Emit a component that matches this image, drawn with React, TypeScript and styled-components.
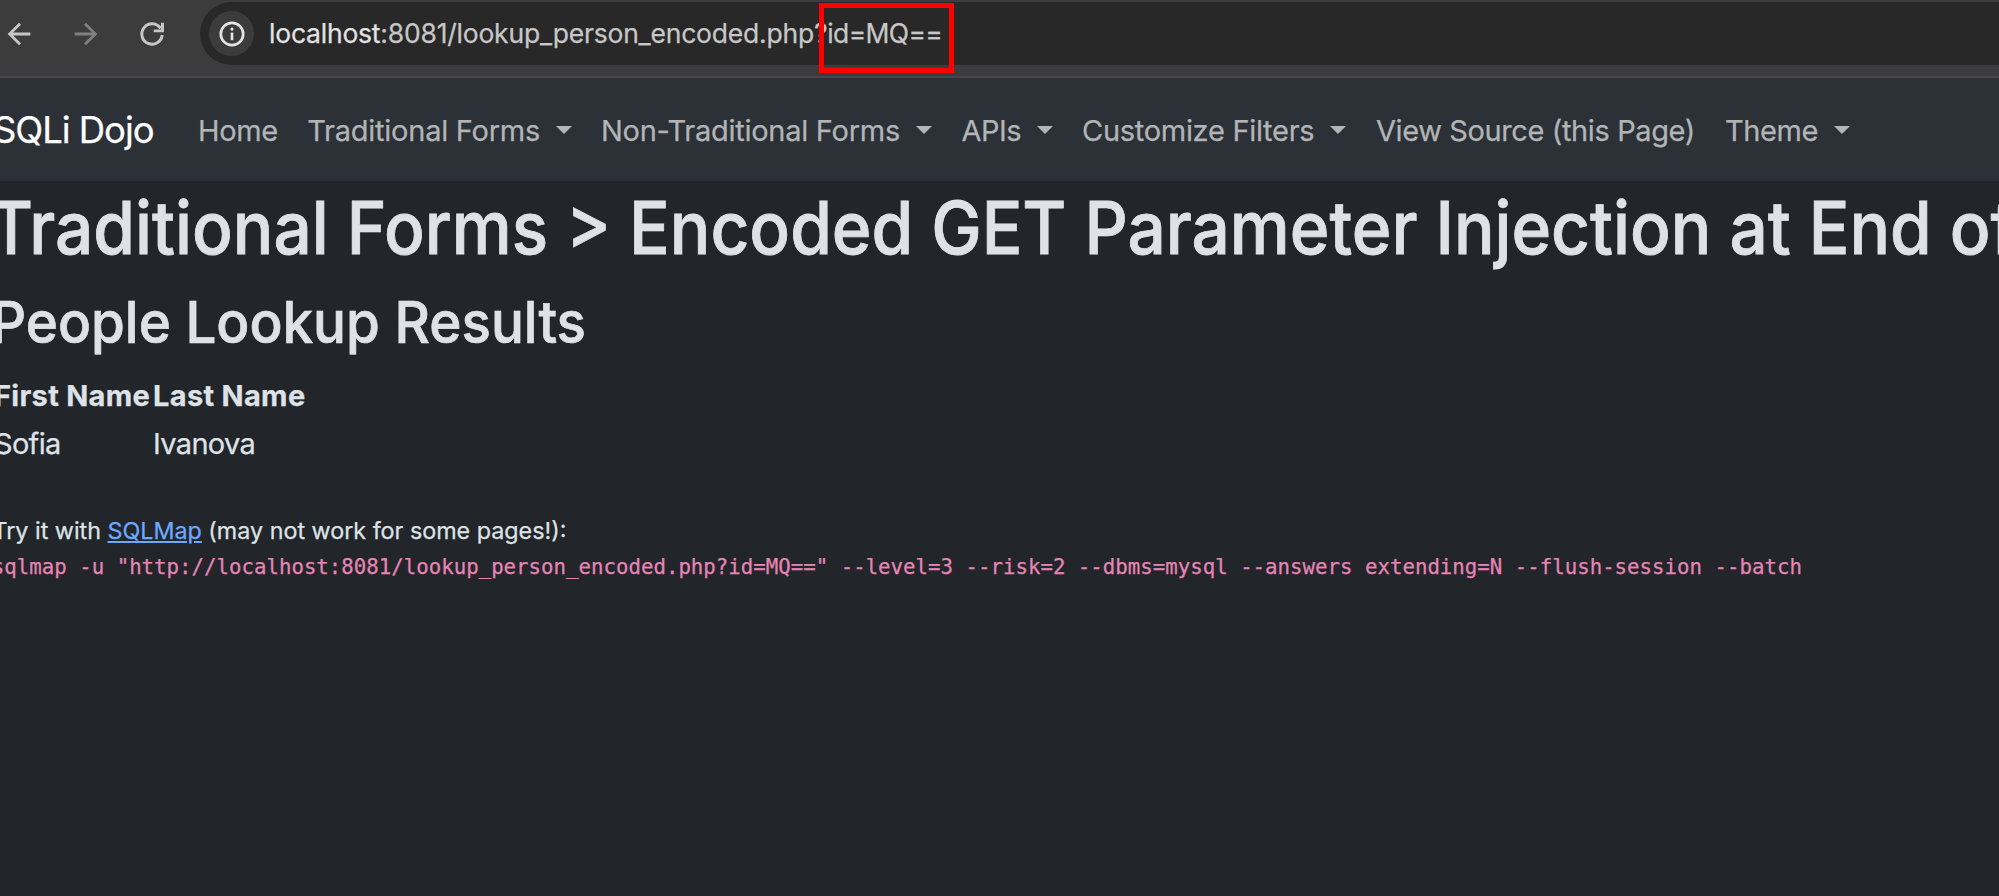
import React from 'react';
import styled, { createGlobalStyle } from 'styled-components';

const GlobalStyle = createGlobalStyle`
  * { box-sizing: border-box; }
  html, body { margin: 0; background: #22252a; }
  body {
    overflow: hidden;
    font-family: Inter, 'Liberation Sans', sans-serif;
    color: #dee2e6;
    -webkit-font-smoothing: antialiased;
    -webkit-text-stroke: 0.25px currentColor;
  }
`;

const Page = styled.div`
  width: 100vw;
  height: 100vh;
  overflow: hidden;
  background: #22252a;
`;

const BrowserBar = styled.header`
  display: flex;
  align-items: flex-start;
  height: 78px;
  padding-top: 2px;
  background: #3c3c3c;
  border-bottom: 2px solid #474747;
`;

const NavButtons = styled.div`
  display: flex;
  align-items: center;
  gap: 32.5px;
  height: 63px;
  padding-left: 2px;
  width: 200px;
`;

const ToolbarIcon = styled.svg<{ $muted?: boolean }>`
  width: 34px;
  height: 34px;
  flex: none;
  color: ${(p) => (p.$muted ? '#7f7f7f' : '#c7c7c7')};
`;

const AddressBar = styled.div`
  position: relative;
  display: flex;
  align-items: center;
  flex: 1;
  height: 63px;
  padding-left: 9px;
  background: #282828;
  border-radius: 32px 0 0 32px;
`;

const SiteInfo = styled.span`
  display: flex;
  align-items: center;
  justify-content: center;
  width: 45px;
  height: 45px;
  border-radius: 50%;
  background: #3c3c3c;
  color: #e3e3e3;
`;

const Url = styled.span`
  margin-left: 15px;
  font-size: 26.5px;
  line-height: 63px;
  letter-spacing: -0.21px;
  white-space: nowrap;
  color: #c7c7c7;
`;

const Host = styled.span`
  color: #e3e3e3;
`;

const Query = styled.span`
  letter-spacing: -0.65px;
`;

const Highlight = styled.span`
  position: absolute;
  left: 619px;
  top: 1px;
  width: 135px;
  height: 70px;
  border: 5px solid #ff0000;
`;

const Navbar = styled.nav`
  display: flex;
  align-items: center;
  height: 103px;
  padding-top: 1px;
  background: #2c3037;
`;

const Brand = styled.a`
  flex: none;
  width: 205px;
  margin-left: -7px;
  font-size: 36.5px;
  letter-spacing: -1.05px;
  white-space: nowrap;
  color: #fff;
`;

const NavItem = styled.a<{ $width: number; $tracking: number }>`
  display: flex;
  align-items: center;
  flex: none;
  width: ${(p) => p.$width}px;
  font-size: 29px;
  letter-spacing: ${(p) => p.$tracking}px;
  white-space: nowrap;
  color: #b2b4b6;
`;

const Caret = styled.span`
  margin: -1px 0 0 15.5px;
  border-top: 8.5px solid currentColor;
  border-left: 8.5px solid transparent;
  border-right: 8.5px solid transparent;
`;

const Content = styled.main`
  margin-left: -6px;
  padding-top: 3px;
  white-space: nowrap;
`;

const Title = styled.h1`
  width: max-content;
  margin: 0 0 15px -5.5px;
  font-size: 73px;
  font-weight: 500;
  line-height: 88px;
  -webkit-text-stroke-width: 0.8px;
  transform: scaleX(0.9245);
  transform-origin: left;
`;

const Subtitle = styled.h2`
  width: max-content;
  margin: 0 0 13px -3.5px;
  font-size: 58px;
  font-weight: 500;
  line-height: 70px;
  -webkit-text-stroke-width: 0.7px;
  transform: scaleX(0.944);
  transform-origin: left;
`;

const People = styled.table`
  border-collapse: separate;
  border-spacing: 3px 3px;
  margin: 0 0 44px -3px;
  font-size: 29px;
  line-height: 45px;
`;

const HeadCell = styled.th`
  padding: 0;
  text-align: left;
  letter-spacing: 0.3px;
`;

const Cell = styled.td`
  padding: 0;
  letter-spacing: -0.7px;
`;

const Hint = styled.p`
  margin: 0 0 2px -1.5px;
  font-size: 23.3px;
  line-height: 36px;
`;

const HintLink = styled.a`
  color: #6ea8fe;
  text-decoration: underline;
`;

const Command = styled.code`
  display: block;
  margin-left: -2.2px;
  font-family: 'DejaVu Sans Mono', monospace;
  font-size: 20.74px;
  line-height: 32px;
  color: #e685b5;
`;

const navItems = [
  { label: 'Home', width: 109.3, tracking: -0.33 },
  { label: 'Traditional Forms', width: 293.7, tracking: -0.25, menu: true },
  { label: 'Non-Traditional Forms', width: 360.5, tracking: -0.265, menu: true },
  { label: 'APIs', width: 120.5, tracking: -0.5, menu: true },
  { label: 'Customize Filters', width: 294, tracking: -0.29, menu: true },
  { label: 'View Source (this Page)', width: 349, tracking: -0.39 },
  { label: 'Theme', width: 130, tracking: -0.4, menu: true },
];

const people = [{ first: 'Sofia', last: 'Ivanova' }];

export default function App() {
  return (
    <Page>
      <GlobalStyle />
      <BrowserBar>
        <NavButtons>
          <ToolbarIcon viewBox="0 0 24 24" fill="currentColor">
            <path d="M7.825 13l5.6 5.6L12 20l-8-8 8-8 1.425 1.4L7.825 11H20v2z" />
          </ToolbarIcon>
          <ToolbarIcon $muted viewBox="0 0 24 24" fill="currentColor">
            <path d="M16.175 13l-5.6 5.6L12 20l8-8-8-8-1.425 1.4L16.175 11H4v2z" />
          </ToolbarIcon>
          <ToolbarIcon viewBox="0 0 24 24" fill="none" stroke="currentColor" strokeWidth="2.1">
            <path d="M19.2 12.7A7.2 7.2 0 1 1 18 8" />
            <path d="M19.4 4v5.8H13.2" />
          </ToolbarIcon>
        </NavButtons>
        <AddressBar>
          <SiteInfo>
            <svg width="26" height="26" viewBox="0 0 26 26" fill="none" stroke="currentColor">
              <circle cx="13" cy="13" r="11.2" strokeWidth="2.7" />
              <path d="M13 11.6v7.6" strokeWidth="2.7" />
              <circle cx="13" cy="8.1" r="1.6" fill="currentColor" stroke="none" />
            </svg>
          </SiteInfo>
          <Url>
            <Host>localhost</Host>:8081/lookup_person_encoded.php?<Query>id=MQ==</Query>
          </Url>
          <Highlight />
        </AddressBar>
      </BrowserBar>
      <Navbar>
        <Brand>SQLi Dojo</Brand>
        {navItems.map((item) => (
          <NavItem key={item.label} $width={item.width} $tracking={item.tracking}>
            {item.label}
            {item.menu && <Caret />}
          </NavItem>
        ))}
      </Navbar>
      <Content>
        <Title>Traditional Forms &gt; Encoded GET Parameter Injection at End of</Title>
        <Subtitle>People Lookup Results</Subtitle>
        <People>
          <thead>
            <tr>
              <HeadCell>First Name</HeadCell>
              <HeadCell>Last Name</HeadCell>
            </tr>
          </thead>
          <tbody>
            {people.map((person) => (
              <tr key={person.first}>
                <Cell>{person.first}</Cell>
                <Cell>{person.last}</Cell>
              </tr>
            ))}
          </tbody>
        </People>
        <Hint>
          Try it with <HintLink>SQLMap</HintLink> (may not work for some pages!):
        </Hint>
        <Command>
          sqlmap -u "http://localhost:8081/lookup_person_encoded.php?id=MQ==" --level=3 --risk=2
          --dbms=mysql --answers extending=N --flush-session --batch
        </Command>
      </Content>
    </Page>
  );
}
